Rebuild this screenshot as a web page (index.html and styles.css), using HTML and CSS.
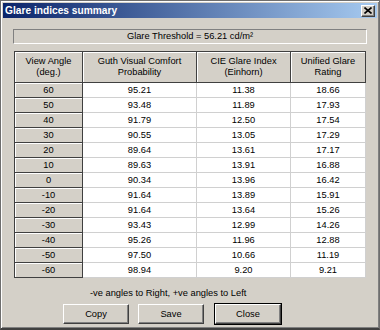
FILE: index.html
```html
<!DOCTYPE html>
<html>
<head>
<meta charset="utf-8">
<link rel="stylesheet" href="styles.css">
</head>
<body>
<div class="window">
  <div class="titlebar">
    <span class="title">Glare indices summary</span>
    <span class="xbtn"><svg width="8" height="7" viewBox="0 0 8 7"><path d="M0.5 0.5 L7.5 6.5 M7.5 0.5 L0.5 6.5" stroke="#000" stroke-width="1.6"/></svg></span>
  </div>
  <div class="threshold">Glare Threshold = 56.21 cd/m²</div>
  <table class="grid">
    <colgroup><col class="c1"><col class="c2"><col class="c3"><col class="c4"></colgroup>
    <thead>
      <tr><th>View Angle<br>(deg.)</th><th>Guth Visual Comfort<br>Probability</th><th>CIE Glare Index<br>(Einhorn)</th><th>Unified Glare<br>Rating</th></tr>
    </thead>
    <tbody>
      <tr><td class="rh">60</td><td>95.21</td><td>11.38</td><td>18.66</td></tr>
      <tr><td class="rh">50</td><td>93.48</td><td>11.89</td><td>17.93</td></tr>
      <tr><td class="rh">40</td><td>91.79</td><td>12.50</td><td>17.54</td></tr>
      <tr><td class="rh">30</td><td>90.55</td><td>13.05</td><td>17.29</td></tr>
      <tr><td class="rh">20</td><td>89.64</td><td>13.61</td><td>17.17</td></tr>
      <tr><td class="rh">10</td><td>89.63</td><td>13.91</td><td>16.88</td></tr>
      <tr><td class="rh">0</td><td>90.34</td><td>13.96</td><td>16.42</td></tr>
      <tr><td class="rh">-10</td><td>91.64</td><td>13.89</td><td>15.91</td></tr>
      <tr><td class="rh">-20</td><td>91.64</td><td>13.64</td><td>15.26</td></tr>
      <tr><td class="rh">-30</td><td>93.43</td><td>12.99</td><td>14.26</td></tr>
      <tr><td class="rh">-40</td><td>95.26</td><td>11.96</td><td>12.88</td></tr>
      <tr><td class="rh">-50</td><td>97.50</td><td>10.66</td><td>11.19</td></tr>
      <tr><td class="rh">-60</td><td>98.94</td><td>9.20</td><td>9.21</td></tr>
    </tbody>
  </table>
  <div class="note">-ve angles to Right, +ve angles to Left</div>
  <div class="buttons">
    <button class="btn">Copy</button>
    <button class="btn">Save</button>
    <button class="btn default">Close</button>
  </div>
</div>
</body>
</html>
```
FILE: styles.css
```css
html, body {
  margin: 0;
  padding: 0;
  background: #d4d0c8;
}
.window {
  width: 380px;
  height: 330px;
  box-sizing: border-box;
  border: 1px solid #6e6e6e;
  border-bottom: 2px solid #404040;
  box-shadow: inset 1px 1px #ffffff, inset -1px -1px #808080;
  padding: 2px;
  background: #d4d0c8;
  font-family: "Liberation Sans", Arial, sans-serif;
  font-size: 9.3px;
  color: #000;
  display: flex;
  flex-direction: column;
}
.titlebar {
  height: 15px;
  background: linear-gradient(to right, #0a246a, #a6caf0);
  display: flex;
  align-items: center;
  justify-content: space-between;
}
.title {
  color: #fff;
  font-weight: bold;
  font-size: 10.2px;
  padding-left: 2px;
}
.xbtn {
  width: 14px;
  height: 12px;
  box-sizing: border-box;
  margin-right: 2px;
  background: #d4d0c8;
  border: 1px solid;
  border-color: #fff #404040 #404040 #fff;
  box-shadow: inset -1px -1px #808080;
  display: flex;
  align-items: center;
  justify-content: center;
}
.xbtn svg { display: block; }
.threshold {
  margin: 11px 10px 0 10px;
  height: 15px;
  box-sizing: border-box;
  border: 1px solid;
  border-color: #808080 #fff #fff #808080;
  text-align: center;
  line-height: 13px;
}
.grid {
  margin: 7px 0 0 11px;
  width: 351px;
  table-layout: fixed;
  border-collapse: collapse;
  border: 1px solid #404040;
}
.c1 { width: 68px; }
.c2 { width: 114px; }
.c3 { width: 94px; }
.c4 { width: 75px; }
.grid th {
  height: 30px;
  padding: 0;
  font-weight: normal;
  line-height: 11px;
  background: #d4d0c8;
  border: 1px solid #404040;
  box-shadow: inset 1px 1px #fff;
  text-align: center;
  vertical-align: middle;
}
.grid td {
  height: 14px;
  padding: 0;
  line-height: 13px;
  text-align: center;
  background: #fff;
  border: 1px solid #d0d0d0;
}
.grid td.rh {
  background: #d4d0c8;
  border: 1px solid #404040;
  box-shadow: inset 1px 1px #fff;
}
.note {
  margin-top: 10px;
  padding-left: 87px;
  height: 11px;
  line-height: 11px;
}
.buttons {
  margin-top: 5px;
  padding-left: 60px;
  display: flex;
  gap: 9px;
}
.btn {
  width: 66px;
  height: 20px;
  box-sizing: border-box;
  margin: 0;
  padding: 0;
  font-family: "Liberation Sans", Arial, sans-serif;
  font-size: 9.3px;
  color: #000;
  background: #d4d0c8;
  border: 1px solid;
  border-color: #fff #404040 #404040 #fff;
  box-shadow: inset -1px -1px #808080;
}
.btn.default {
  margin-left: 2px;
  outline: 1px solid #000;
  border-color: #fff #404040 #404040 #fff;
}
```
